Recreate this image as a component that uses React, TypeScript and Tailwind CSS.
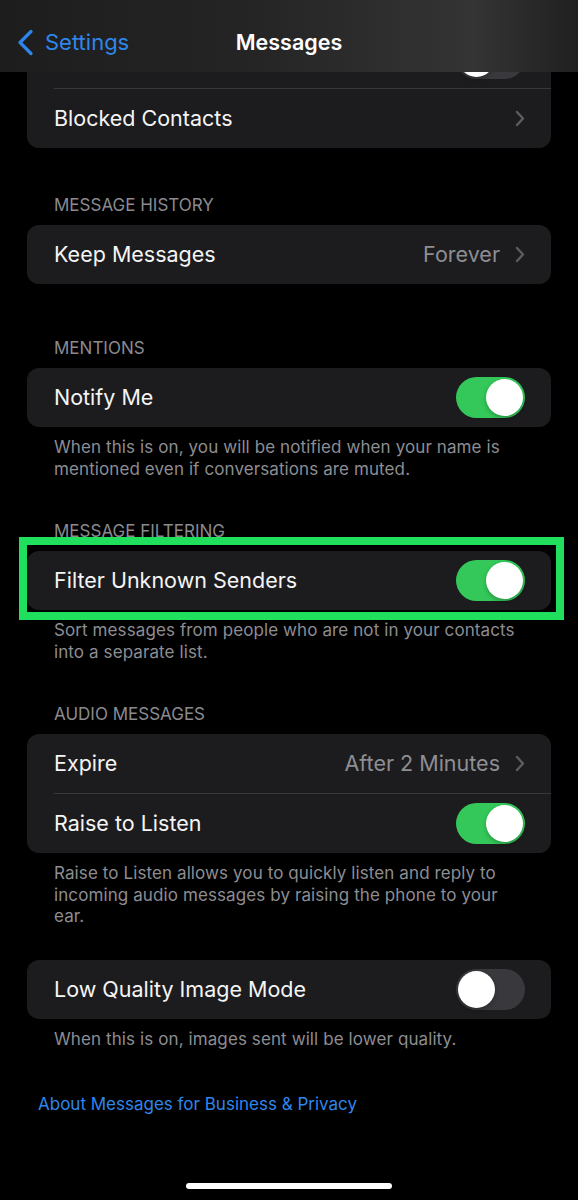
import React from 'react';

const font = { fontFamily: 'Inter, "Noto Sans", sans-serif' };

function Toggle({ on }: { on: boolean }) {
  return (
    <div
      className={`flex h-[41px] w-[69px] shrink-0 items-center rounded-full p-[2px] ${
        on ? 'justify-end bg-[#34c759]' : 'justify-start bg-[#39393d]'
      }`}
    >
      <div className="h-[37px] w-[37px] rounded-full bg-white shadow-[0_2px_4px_rgba(0,0,0,0.25)]" />
    </div>
  );
}

function Chevron() {
  return (
    <svg width="10" height="17" viewBox="0 0 10 17" fill="none" className="shrink-0">
      <path d="M2 2l6 6.5L2 15" stroke="#5c5c61" strokeWidth="2.4" strokeLinecap="round" strokeLinejoin="round" />
    </svg>
  );
}

function Row({ label, value, toggle, chevron }: { label?: string; value?: string; toggle?: boolean; chevron?: boolean }) {
  return (
    <div className="flex h-[59px] items-center pl-[27px] pr-[26px]">
      <span className="flex-1 text-[21.5px] text-[#f4f4f5]">{label}</span>
      {value && <span className="mr-[15px] text-[21.5px] text-[#8e8e93]">{value}</span>}
      {chevron && <Chevron />}
      {toggle !== undefined && <Toggle on={toggle} />}
    </div>
  );
}

function Divider() {
  return <div className="ml-[27px] h-px bg-[#38383a]" />;
}

function Label({ text, top }: { text: string; top: string }) {
  return (
    <div className={`${top} mb-[10px] h-[20px] pl-[54px] text-[17px] leading-[20px] text-[#8a8a8f]`}>{text}</div>
  );
}

function Footer({ children }: { children: React.ReactNode }) {
  return (
    <p className="mt-[10px] pl-[54px] pr-[20px] text-[17px] leading-[21.5px] tracking-[0.1px] text-[#8d8d92]">{children}</p>
  );
}

function Card({ children }: { children: React.ReactNode }) {
  return <div className="mx-[27px] w-[524px] rounded-[12px] bg-[#1c1c1e]">{children}</div>;
}

export default function App() {
  return (
    <div className="relative flex min-h-[1200px] w-[578px] flex-col overflow-hidden bg-black" style={font}>
      {/* nav bar, sits over the scrolled list */}
      <div className="absolute inset-x-0 top-0 z-10 h-[72px] bg-[linear-gradient(90deg,#1d1d1e_0%,#252526_45%,#343435_82%,#202021_100%)] pt-[24px]">
        <div className="grid h-[36px] grid-cols-[1fr_auto_1fr] items-center">
          <div className="flex items-center pl-[17px]">
            <svg width="17" height="27" viewBox="0 0 17 27" fill="none">
              <path d="M14 2.5L3 13.5l11 11" stroke="#2f86ea" strokeWidth="3.2" strokeLinecap="round" strokeLinejoin="round" />
            </svg>
            <span className="ml-[11px] text-[22px] text-[#2f86ea]">Settings</span>
          </div>
          <span className="text-[21.5px] font-semibold text-white">Messages</span>
          <div />
        </div>
      </div>

      <div className="pt-[29px]">
        <Card>
          <Row toggle={false} />
          <Divider />
          <Row label="Blocked Contacts" chevron />
        </Card>
      </div>

      <Label text="MESSAGE HISTORY" top="mt-[47px]" />
      <Card>
        <Row label="Keep Messages" value="Forever" chevron />
      </Card>

      <Label text="MENTIONS" top="mt-[54px]" />
      <Card>
        <Row label="Notify Me" toggle />
      </Card>
      <Footer>
        When this is on, you will be notified when your name is
        <br />
        mentioned even if conversations are muted.
      </Footer>

      <Label text="MESSAGE FILTERING" top="mt-[41px]" />
      <div className="relative">
        <Card>
          <Row label="Filter Unknown Senders" toggle />
        </Card>
        <div className="pointer-events-none absolute bottom-[-10px] left-[19px] top-[-14px] w-[545px] border-[8.5px] border-[#20df5c]" />
      </div>
      <Footer>
        Sort messages from people who are not in your contacts
        <br />
        into a separate list.
      </Footer>

      <Label text="AUDIO MESSAGES" top="mt-[41px]" />
      <Card>
        <Row label="Expire" value="After 2 Minutes" chevron />
        <Divider />
        <Row label="Raise to Listen" toggle />
      </Card>
      <Footer>
        Raise to Listen allows you to quickly listen and reply to
        <br />
        incoming audio messages by raising the phone to your
        <br />
        ear.
      </Footer>

      <div className="mt-[32px]">
        <Card>
          <Row label="Low Quality Image Mode" toggle={false} />
        </Card>
      </div>
      <Footer>When this is on, images sent will be lower quality.</Footer>

      <p className="mt-[44px] pl-[38px] text-[17px] leading-[21.5px] text-[#2f86ea]">About Messages for Business &amp; Privacy</p>

      <div className="mx-auto mb-[11px] mt-auto h-[6px] w-[206px] rounded-full bg-white" />
    </div>
  );
}
